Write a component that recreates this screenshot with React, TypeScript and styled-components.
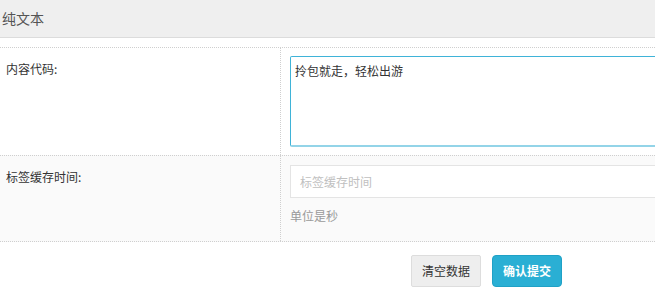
import React from "react";
import styled, { createGlobalStyle } from "styled-components";

const Global = createGlobalStyle`
  html, body { margin: 0; padding: 0; background: #fff; overflow: hidden; }
  body { font-family: "Noto Sans CJK SC", "Noto Sans", sans-serif; font-size: 12px; color: #333; }
`;

const Panel = styled.div`
  width: 100%;
  overflow: hidden;
`;

const Heading = styled.div`
  height: 37px;
  background: #efefef;
  border-bottom: 1px solid #dcdcdc;
  padding-left: 2px;
  font-size: 14px;
  line-height: 37px;
  color: #555;
`;

const Body = styled.div`
  padding-top: 9px;
`;

const Row = styled.div<{ $shade?: boolean; $h: number; $last?: boolean }>`
  display: grid;
  grid-template-columns: 280px 1fr;
  height: ${(p) => p.$h}px;
  border-top: 1px dotted #cfcfcf;
  border-bottom: ${(p) => (p.$last ? "1px dotted #cfcfcf" : "none")};
  background: ${(p) => (p.$shade ? "#fafafa" : "#fff")};
`;

const Label = styled.div`
  padding: 12px 0 0 6px;
  line-height: 18px;
  color: #333;
`;

const Field = styled.div`
  border-left: 1px dotted #cfcfcf;
  padding: 8px 0 0 9px;
  overflow: hidden;
`;

const TextArea = styled.div`
  box-sizing: border-box;
  width: calc(100% + 20px);
  height: 91px;
  border: 1px solid #3fb3d8;
  border-bottom: 2px solid #93d4e8;
  border-radius: 2px;
  background: #fff;
  padding: 6px 4px;
  line-height: 16px;
  color: #333;
`;

const Input = styled.div`
  box-sizing: border-box;
  width: calc(100% + 20px);
  height: 33px;
  margin-top: 1px;
  border: 1px solid #e4e4e4;
  background: #fff;
  padding-left: 9px;
  line-height: 31px;
  color: #c0c0c0;
`;

const Help = styled.div`
  margin-top: 9px;
  line-height: 18px;
  color: #999;
`;

const Actions = styled.div`
  display: flex;
  gap: 11px;
  padding: 13px 0 0 411px;
`;

const Button = styled.div<{ $primary?: boolean }>`
  box-sizing: border-box;
  height: 32px;
  padding: 0 10px;
  line-height: 30px;
  border-radius: ${(p) => (p.$primary ? "4px" : "2px")};
  border: 1px solid ${(p) => (p.$primary ? "#1fa1c6" : "#dddddd")};
  background: ${(p) => (p.$primary ? "#2aafd4" : "#eeeeee")};
  color: ${(p) => (p.$primary ? "#fff" : "#333")};
  font-weight: ${(p) => (p.$primary ? 700 : 400)};
`;

export default function App() {
  return (
    <>
      <Global />
      <Panel>
        <Heading>纯文本</Heading>
        <Body>
          <Row $h={107}>
            <Label>内容代码:</Label>
            <Field>
              <TextArea>拎包就走，轻松出游</TextArea>
            </Field>
          </Row>
          <Row $h={85} $shade $last>
            <Label>标签缓存时间:</Label>
            <Field>
              <Input>标签缓存时间</Input>
              <Help>单位是秒</Help>
            </Field>
          </Row>
          <Actions>
            <Button>清空数据</Button>
            <Button $primary>确认提交</Button>
          </Actions>
        </Body>
      </Panel>
    </>
  );
}
